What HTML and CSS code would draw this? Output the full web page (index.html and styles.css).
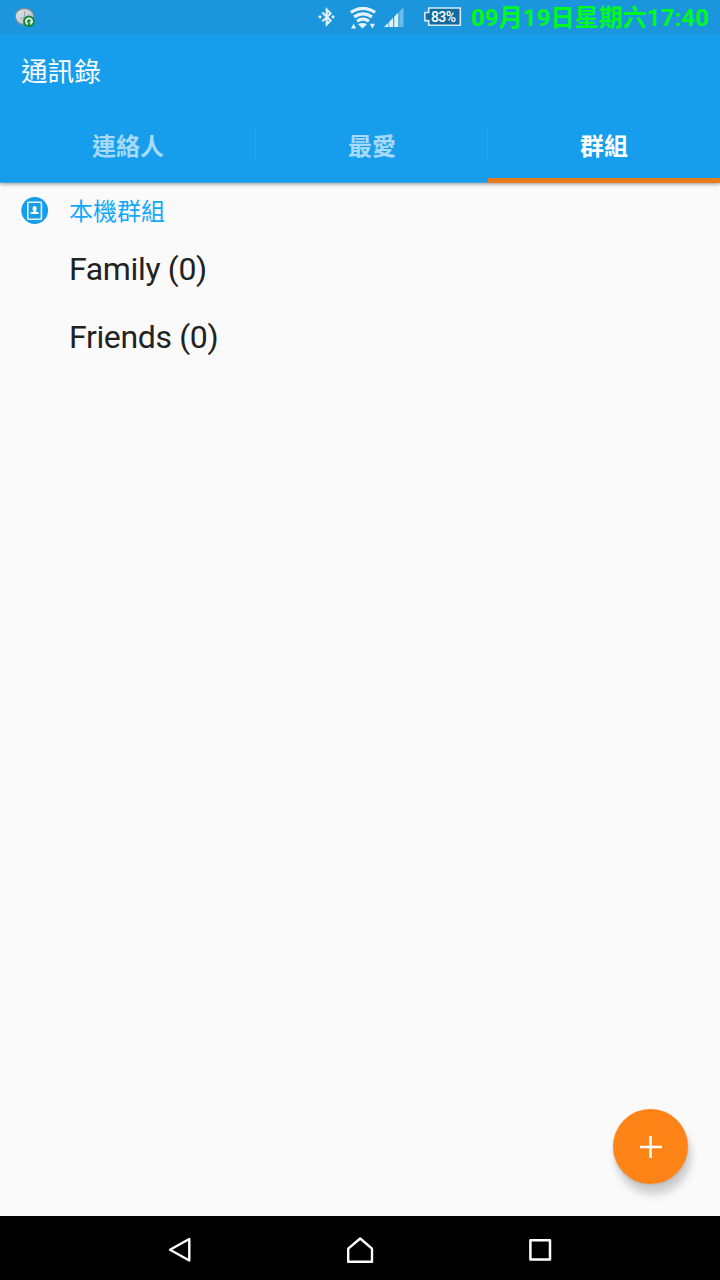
FILE: index.html
```html
<!DOCTYPE html>
<html lang="zh-Hant">
<head>
<meta charset="utf-8">
<title>通訊錄</title>
<link rel="stylesheet" href="styles.css">
</head>
<body>
<div class="screen">
  <header class="header">
    <div class="status">
      <svg class="status-sync" width="22" height="22" viewBox="0 0 22 22">
        <defs>
          <linearGradient id="dial" x1="0" y1="0" x2="1" y2="1"><stop offset="0" stop-color="#e2e6e8"/><stop offset="1" stop-color="#aebfca"/></linearGradient>
        </defs>
        <ellipse cx="9.500" cy="9.500" rx="9.300" ry="8" fill="url(#dial)" stroke="#7c8d95" stroke-width="1.400"/>
        <path d="M9.500 4v6M9.500 10l-4 2" stroke="#98a2a8" stroke-width=".9" fill="none"/>
        <circle cx="13.900" cy="14.300" r="5.900" fill="#178340"/>
        <path d="M13 17.200a3 3 0 1 1 3.800-1.700" fill="none" stroke="#d9f7d5" stroke-width="2"/>
        <path d="M14.200 14.500l4.200.3-2.600 3.500z" fill="#d9f7d5"/>
      </svg>
      <svg class="status-bt" width="18" height="20" viewBox="0 0 18 20">
        <path d="M4.300 5.500l8.300 8L8.700 17.500V2.500l3.900 3.900-8.300 8" fill="none" stroke="#e6f3fc" stroke-width="2"/>
        <path d="M2 8l1.900 1.900L2 11.800.1 9.900zM15 8l1.900 1.900-1.900 1.900-1.900-1.900z" fill="#e6f3fc"/>
      </svg>
      <svg class="status-wifi" width="26" height="22" viewBox="0 0 26 22">
        <g fill="none" stroke="#e6f3fc" stroke-width="3.200">
          <path d="M.9 5.400Q13-2.700 25.100 5.400"/>
          <path d="M4.100 9.900Q13 3.700 21.900 9.900"/>
          <path d="M7.100 14.200Q13 10.100 18.900 14.200"/>
        </g>
        <path d="M8 17.200Q12.500 14.700 17 17.200L12.500 21.500zM1 21.500l2.600-4.800 2.600 4.800zM19.800 16.700H25l-2.600 4.800z" fill="#e6f3fc"/>
      </svg>
      <svg class="status-signal" width="20" height="20" viewBox="0 0 20 20">
        <path d="M0 20L4.500 15.500V20zM5.200 14.800L9.200 10.800V20h-4zM10.300 9.400L14.300 5.400V20h-4z" fill="#e6f3fc"/>
        <path d="M15.300 4.500L19.500.3V20h-4.200z" fill="#6dbbe9"/>
      </svg>
      <div class="battery">
        <svg class="battery-shape" width="38" height="20" viewBox="0 0 38 20">
          <path d="M4.700 1H36.300V18.300H4.700V13.600H.9V5.500H4.700z" fill="#136a9e" stroke="#d5eaf7" stroke-width="1.600"/>
        </svg>
        <span class="battery-level">83%</span>
      </div>
      <span class="clock">09月19日星期六17:40</span>
    </div>
    <h1 class="title">通訊錄</h1>
    <nav class="tabs">
      <div class="tab tab-first">連絡人</div>
      <div class="tab">最愛</div>
      <div class="tab tab-active">群組</div>
    </nav>
  </header>
  <main class="content">
    <div class="account">
      <svg class="account-icon" width="28" height="28" viewBox="0 0 28 28">
        <circle cx="13.700" cy="13.500" r="13.400" fill="#169dec"/>
        <rect x="6.800" y="5.200" width="13.600" height="17" rx=".8" fill="none" stroke="#e3f4fd" stroke-width="1.600"/>
        <path d="M13.600 9a2.200 2.300 0 0 1 2.100 2.500q0 1.400-.9 2.200v.8l2.800 1V17H9.600v-1.500l2.800-1v-.8q-.9-.8-.9-2.200A2.200 2.300 0 0 1 13.600 9z" fill="#fff"/>
      </svg>
      <span class="account-name">本機群組</span>
    </div>
    <ul class="groups">
      <li class="group">Family (0)</li>
      <li class="group">Friends (0)</li>
    </ul>
    <button class="fab" aria-label="新增">
      <svg width="22" height="22" viewBox="0 0 22 22"><path d="M10.500 0v22M0 11h22" stroke="#fff" stroke-width="2.500"/></svg>
    </button>
  </main>
  <footer class="navbar">
    <div class="nav-item"><svg width="26" height="28" viewBox="0 0 26 28"><path d="M22.300 3V24.500L3 13.800z" fill="none" stroke="#fff" stroke-width="2.400" stroke-linejoin="round"/></svg></div>
    <div class="nav-item"><svg width="28" height="28" viewBox="0 0 28 28"><path d="M2.200 12.700L14.200 2.500 26 12.700V25.800H2.200z" fill="none" stroke="#fff" stroke-width="2.400" stroke-linejoin="round"/></svg></div>
    <div class="nav-item"><svg width="24" height="24" viewBox="0 0 24 24"><rect x="2.400" y="2.200" width="19.600" height="19.200" fill="none" stroke="#fff" stroke-width="2.500" stroke-linejoin="round"/></svg></div>
  </footer>
</div>
</body>
</html>
```
FILE: styles.css
```css
* {
  box-sizing: border-box;
}

body {
  margin: 0;
  font-family: Roboto, "Noto Sans CJK TC", sans-serif;
}

.screen {
  display: flex;
  flex-direction: column;
  width: 720px;
  height: 1280px;
  overflow: hidden;
  background: #fafafa;
}

.header {
  display: flex;
  flex-direction: column;
  flex: none;
  height: 183px;
  background: #169dec;
  border-bottom: 1px solid #45a4dc;
  box-shadow: 0 1px 4px rgba(0, 0, 0, 0.42);
  z-index: 1;
}

.status {
  display: flex;
  flex: none;
  align-items: flex-start;
  height: 34px;
  padding: 7px 0 0 15px;
  background: #1b96dd;
}

.status svg {
  flex: none;
}

.status-bt {
  margin-left: 281px;
}

.status-wifi {
  margin-left: 14px;
}

.status-signal {
  margin-left: 8px;
}

.battery {
  display: grid;
  flex: none;
  width: 38px;
  height: 20px;
  margin-left: 20px;
}

.battery-shape,
.battery-level {
  grid-area: 1 / 1;
}

.battery-level {
  padding-left: 7px;
  color: #fff;
  font-size: 14px;
  font-weight: 500;
  letter-spacing: -0.6px;
  line-height: 20px;
  z-index: 1;
}

.clock {
  margin: -7px 0 0 9px;
  color: #00fa1e;
  font-size: 24px;
  font-weight: 700;
  letter-spacing: 0.08px;
  line-height: 36px;
  white-space: nowrap;
}

.title {
  flex: none;
  height: 76px;
  margin: 0;
  padding-left: 21px;
  color: #fff;
  font-size: 26.6px;
  font-weight: 400;
  line-height: 76px;
}

.tabs {
  display: grid;
  flex: none;
  grid-template-columns: 256px 232px 232px;
  height: 73px;
}

.tab {
  height: 73px;
  color: #a5daf8;
  font-size: 24px;
  font-weight: 700;
  line-height: 74px;
  text-align: center;
}

.tab:not(.tab-active) {
  height: 72px;
  background: linear-gradient(#2ba4ed, #2ba4ed) right 19px / 1px 32px no-repeat;
}

.tab-active {
  color: #fff;
  border-bottom: 5px solid #e67a1c;
}

.content {
  display: flex;
  flex-direction: column;
  flex: 1;
}

.account {
  display: flex;
  align-items: center;
  height: 56px;
  padding-left: 21px;
}

.account-name {
  margin: -3px 0 0 20px;
  color: #12a8fc;
  font-size: 24px;
}

.groups {
  margin: 0;
  padding: 0;
  list-style: none;
}

.group {
  height: 68px;
  padding-left: 69px;
  color: #222;
  font-size: 32px;
  letter-spacing: -0.35px;
  line-height: 60px;
}

.fab {
  display: flex;
  align-items: center;
  justify-content: center;
  align-self: flex-end;
  width: 75px;
  height: 75px;
  margin: auto 32px 32px 0;
  padding: 0;
  border: 0;
  border-radius: 50%;
  background: #ff8418;
  box-shadow: 3px 10px 9px rgba(0, 0, 0, 0.19), 0 1px 3px rgba(0, 0, 0, 0.12);
}

.navbar {
  display: grid;
  grid-template-columns: repeat(3, 180px);
  justify-content: center;
  height: 64px;
  background: #000;
}

.nav-item {
  display: flex;
  align-items: center;
  justify-content: center;
  padding-top: 4px;
}
```
